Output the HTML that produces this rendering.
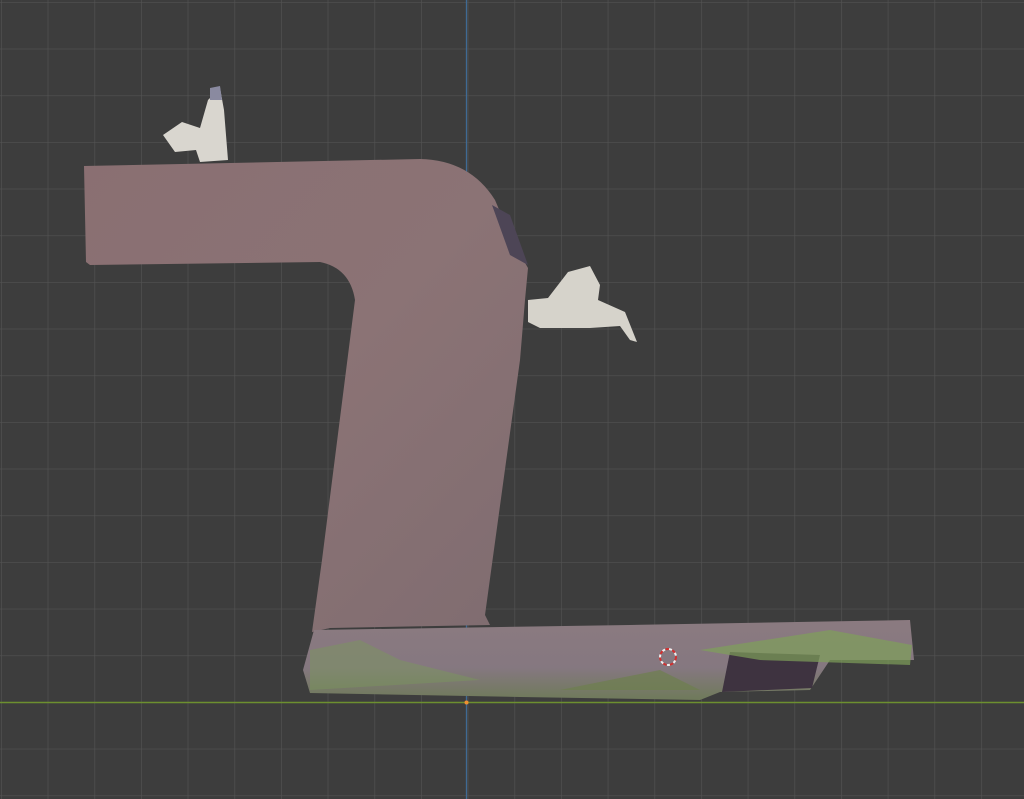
<!DOCTYPE html>
<html><head><meta charset="utf-8"><style>
html,body{margin:0;padding:0;background:#3d3d3d;overflow:hidden}
svg{display:block}
</style></head><body>
<svg width="1024" height="799" viewBox="0 0 1024 799" xmlns="http://www.w3.org/2000/svg">
<defs>
<pattern id="g" x="1" y="2" width="46.67" height="46.67" patternUnits="userSpaceOnUse">
<path d="M0 0H46.67M0 0V46.67" stroke="#525252" stroke-width="1.3" fill="none"/>
</pattern>
<linearGradient id="st" x1="0" y1="0" x2="1" y2="1">
<stop offset="0" stop-color="#8a6f72"/><stop offset="0.5" stop-color="#8b7375"/><stop offset="1" stop-color="#7f6c70"/>
</linearGradient>
<linearGradient id="base" x1="0" y1="0" x2="0" y2="1">
<stop offset="0" stop-color="#8b7a80"/><stop offset="0.6" stop-color="#857880"/><stop offset="1" stop-color="#6f7a5a"/>
</linearGradient>
</defs>
<rect width="1024" height="799" fill="#3d3d3d"/>
<rect width="1024" height="799" fill="url(#g)"/>
<line x1="466.5" y1="0" x2="466.5" y2="799" stroke="#3f6a94" stroke-width="1.3"/>
<path d="M84 166 L420 159 Q470 160 495 200 L512 240 L528 268 L525 300 L520 360 L485 615 L490 625 L330 628 L312 632 L322 560 L355 300 Q350 268 320 262 L90 265 L86 262 Z" fill="url(#st)"/>
<path d="M492 205 L510 215 L528 265 L510 255 Z" fill="#4d4556"/>
<path d="M314 630 L630 625 L910 620 L914 660 L830 660 L810 690 L720 692 L700 700 L520 697 L310 693 L303 670 Z" fill="url(#base)"/>
<path d="M730 652 L820 655 L812 688 L722 692 Z" fill="#3e3340"/>
<path d="M700 650 L830 630 L912 645 L910 665 L760 660 Z" fill="#7fa05a" opacity="0.7"/>
<path d="M310 650 L360 640 L400 660 L480 680 L310 690 Z" fill="#7a9a5c" opacity="0.45"/>
<path d="M560 690 L660 670 L700 690 Z" fill="#6d7f4f" opacity="0.7"/>
<line x1="0" y1="702.5" x2="1024" y2="702.5" stroke="#6d8f2f" stroke-width="1.5"/>
<circle cx="466.5" cy="702.5" r="2" fill="#f09030"/>
<circle cx="668" cy="657" r="8" fill="none" stroke="#d03030" stroke-width="2" stroke-dasharray="4 3"/>
<circle cx="668" cy="657" r="8" fill="none" stroke="#eee" stroke-width="2" stroke-dasharray="3 4" stroke-dashoffset="3.5"/>
<path d="M208 100 L220 88 L224 110 L228 160 L200 162 L196 150 L175 152 L163 135 L182 122 L200 128 Z" fill="#d9d6cf"/>
<path d="M210 88 L220 86 L222 100 L210 100 Z" fill="#8a8aa0"/>
<path d="M528 300 L548 298 L568 272 L590 266 L600 285 L598 300 L625 312 L637 342 L630 340 L620 326 L590 328 L540 328 L528 322 Z" fill="#d6d3cb"/>
</svg>
</body></html>
